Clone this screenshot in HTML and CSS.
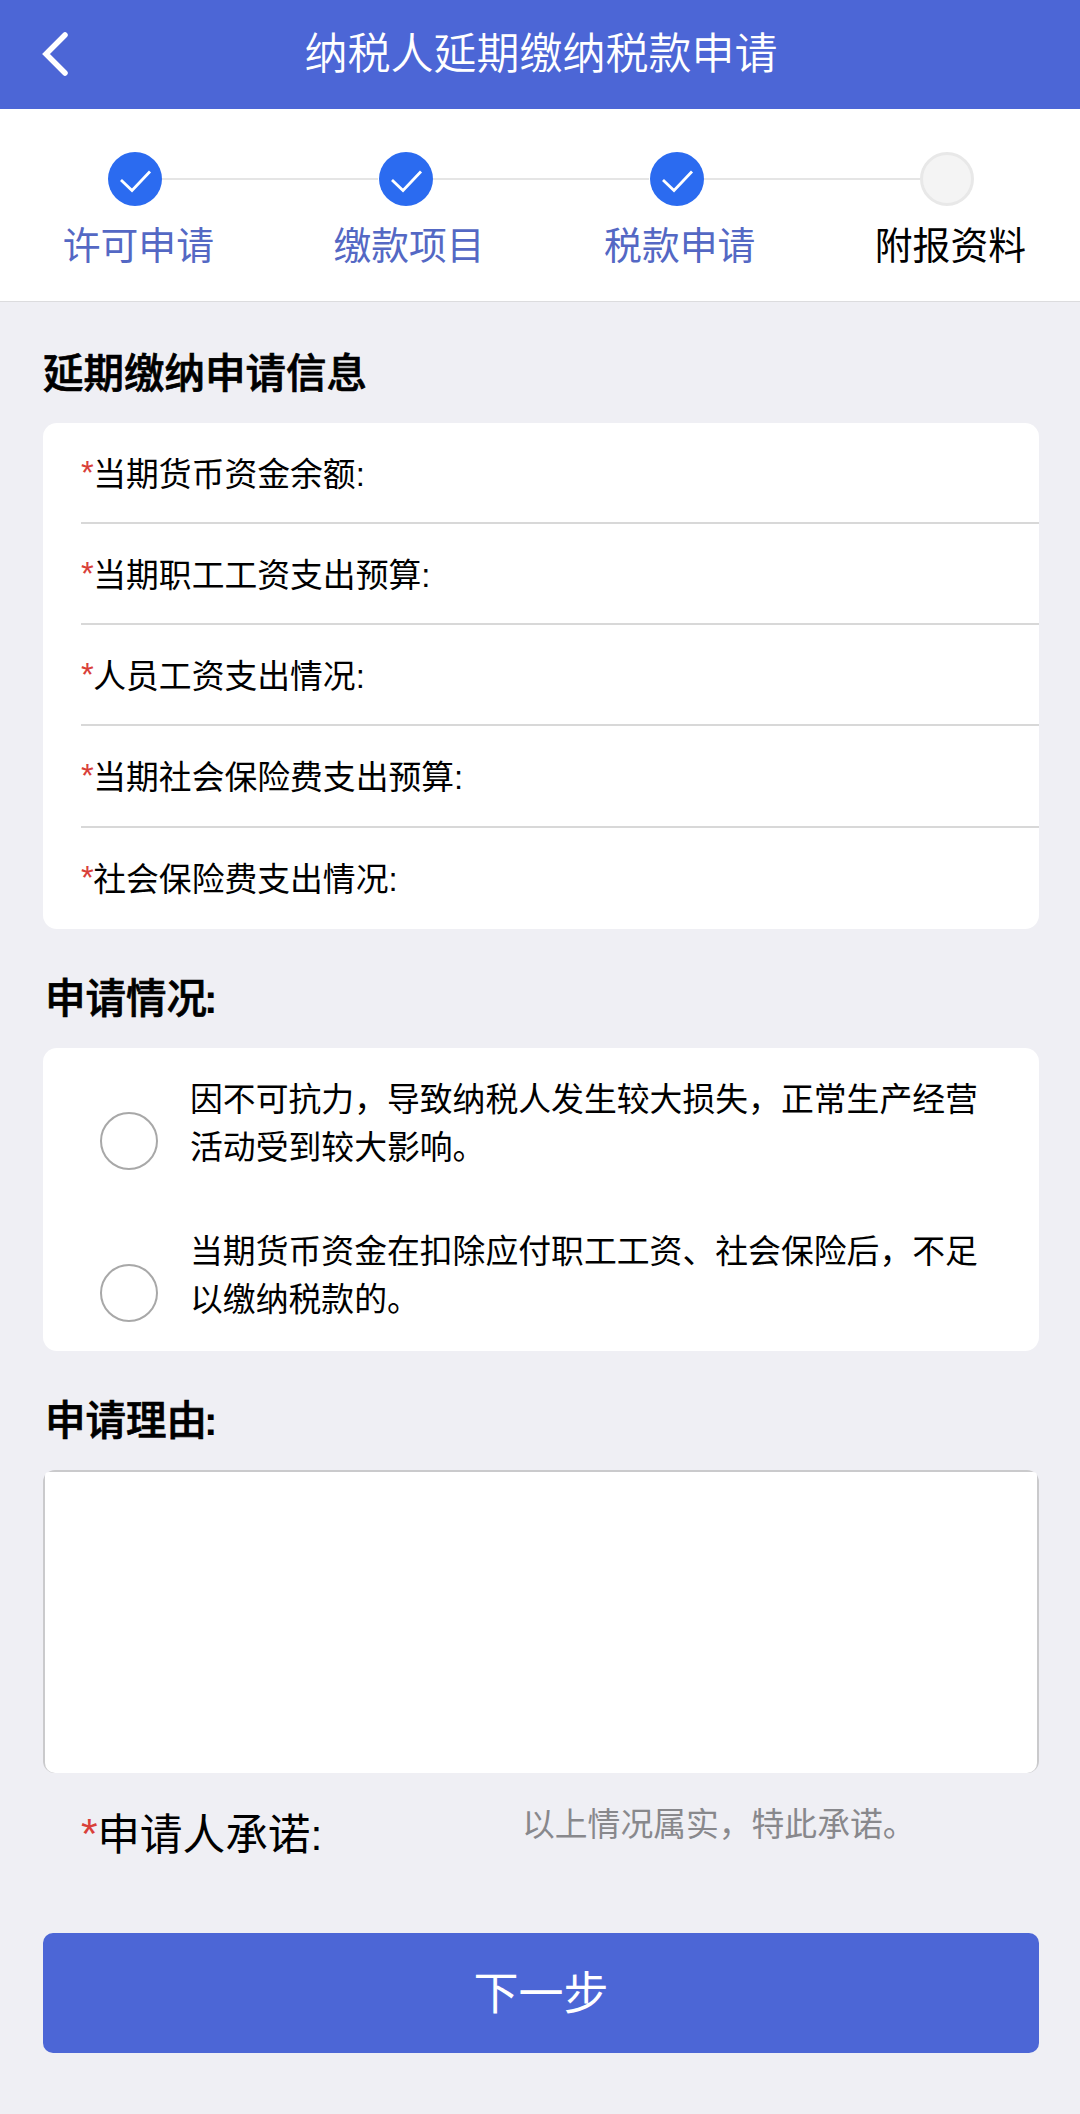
FILE: index.html
```html
<!DOCTYPE html>
<html lang="zh-CN">
<head>
  <meta charset="UTF-8">
  <meta name="viewport" content="width=device-width, initial-scale=1.0">
  <title>纳税人延期缴纳税款申请</title>
  <link rel="stylesheet" href="styles.css">
</head>
<body>
  <header class="navbar">
    <svg class="back" viewBox="0 0 28 46"><path d="M23 4 L4 23 L23 42"/></svg>
    <h1>纳税人延期缴纳税款申请</h1>
  </header>

  <div class="steps">
    <div class="step done">
      <div class="dot"><svg viewBox="0 0 54 54"><path d="M13 28 L24 38.5 L42 19.5"/></svg></div>
      <span>许可申请</span>
    </div>
    <div class="step done">
      <div class="dot"><svg viewBox="0 0 54 54"><path d="M13 28 L24 38.5 L42 19.5"/></svg></div>
      <span>缴款项目</span>
    </div>
    <div class="step done">
      <div class="dot"><svg viewBox="0 0 54 54"><path d="M13 28 L24 38.5 L42 19.5"/></svg></div>
      <span>税款申请</span>
    </div>
    <div class="step">
      <div class="dot"></div>
      <span>附报资料</span>
    </div>
  </div>

  <main class="content">
    <h2 class="first">延期缴纳申请信息</h2>
    <div class="card fields">
      <div class="field"><i>*</i>当期货币资金余额:</div>
      <div class="field"><i>*</i>当期职工工资支出预算:</div>
      <div class="field"><i>*</i>人员工资支出情况:</div>
      <div class="field"><i>*</i>当期社会保险费支出预算:</div>
      <div class="field"><i>*</i>社会保险费支出情况:</div>
    </div>

    <h2>申请情况<b>:</b></h2>
    <div class="card options">
      <label class="option">
        <input type="radio" name="reason">
        <span>因不可抗力，导致纳税人发生较大损失，正常生产经营活动受到较大影响。</span>
      </label>
      <label class="option">
        <input type="radio" name="reason">
        <span>当期货币资金在扣除应付职工工资、社会保险后，不足以缴纳税款的。</span>
      </label>
    </div>

    <h2>申请理由<b>:</b></h2>
    <div class="reason"><textarea></textarea></div>

    <div class="promise">
      <div class="promise-label"><i>*</i>申请人承诺:</div>
      <div class="promise-text">以上情况属实，特此承诺。</div>
    </div>

    <button class="next">下一步</button>
  </main>
</body>
</html>
```

FILE: styles.css
```css
* {
  box-sizing: border-box;
}

body {
  margin: 0;
  min-height: 2114px;
  font-family: "Liberation Sans", "Noto Sans CJK SC", sans-serif;
  background: #efeff4;
  color: #000;
}

i {
  font-style: normal;
  line-height: 0;
  vertical-align: 2px;
  margin-right: -0.5px;
  color: #d9403a;
}

.navbar {
  display: grid;
  grid-template-columns: 114px 1fr 112px;
  align-items: center;
  height: 109px;
  padding-bottom: 2px;
  background: #4c66d6;
  color: #fff;
}

.navbar h1 {
  margin: 0;
  font-size: 43px;
  line-height: 60px;
  font-weight: 350;
  text-align: center;
}

.back {
  width: 28px;
  height: 46px;
  margin-left: 42px;
}

.back path {
  fill: none;
  stroke: #fff;
  stroke-width: 5.5;
  stroke-linecap: round;
}

/* steps */
.steps {
  display: flex;
  height: 193px;
  padding-top: 43px;
  background: #fff;
  border-bottom: 1px solid #dcdcde;
  overflow: hidden;
}

.step {
  flex: 0 0 270.7px;
  display: flex;
  flex-direction: column;
  align-items: center;
  position: relative;
}

.step + .step::before {
  content: "";
  position: absolute;
  top: 26px;
  right: 163px;
  width: 216px;
  height: 2px;
  background: #e5e5e5;
}

.dot {
  width: 54px;
  height: 54px;
  border-radius: 50%;
  background: #f4f4f4;
  border: 3px solid #e8e8e8;
}

.done .dot {
  background: #2b6bf0;
  border: none;
}

.dot svg {
  display: block;
}

.dot path {
  fill: none;
  stroke: #fff;
  stroke-width: 2.8;
}

.step span {
  margin: 13px 0 0 6px;
  font-size: 37.8px;
  line-height: 54px;
}

.done span {
  color: #5468c4;
}

.content {
  padding: 0 41px 0 43px;
}

h2 {
  margin: 0;
  padding: 44px 0 23px 2px;
  font-size: 40.5px;
  line-height: 52px;
  font-weight: 500;
  -webkit-text-stroke: 0.7px #000;
}

h2 b {
  margin-left: -3px;
  -webkit-text-stroke: 0;
}

h2.first {
  padding: 46px 0 23px 0;
}

.card {
  background: #fff;
  border-radius: 14px;
}

.fields {
  height: 506px;
  padding-left: 38px;
}

.field {
  height: 101.2px;
  font-size: 32.8px;
  line-height: 104px;
}

.field:first-child {
  height: 99px;
}

.field + .field {
  border-top: 2px solid #d8d8d8;
}

.options {
  height: 303px;
  padding: 28px 60px 0 57px;
}

.option {
  display: flex;
  height: 152px;
}

.option input {
  appearance: none;
  flex: none;
  width: 58px;
  height: 58px;
  margin: 36px 32px 0 0;
  border: 2px solid #a8a8a8;
  border-radius: 50%;
}

.option span {
  flex: none;
  width: 792px;
  font-size: 32.85px;
  line-height: 48px;
}

/* outer grey plate shows as a thin line on top and sides */
.reason {
  height: 303px;
  padding: 2px 2px 0;
  border-radius: 12px;
  background: #cacacc;
}

.reason textarea {
  display: block;
  width: 100%;
  height: 301px;
  border: none;
  border-radius: 4px 4px 10px 10px;
  background: #fff;
  resize: none;
}

.promise {
  display: flex;
  height: 160px;
  padding-left: 38px;
}

.promise-label {
  width: 441px;
  padding-top: 32px;
  font-size: 42.7px;
  line-height: 60px;
}

.promise-text {
  padding-top: 28px;
  font-size: 32.8px;
  line-height: 48px;
  color: #88888c;
}

.next {
  display: block;
  width: 996px;
  height: 120px;
  padding: 0 0 6px;
  border: none;
  border-radius: 10px;
  background: #4c66d6;
  color: #fff;
  font-family: inherit;
  font-size: 45px;
}
```
